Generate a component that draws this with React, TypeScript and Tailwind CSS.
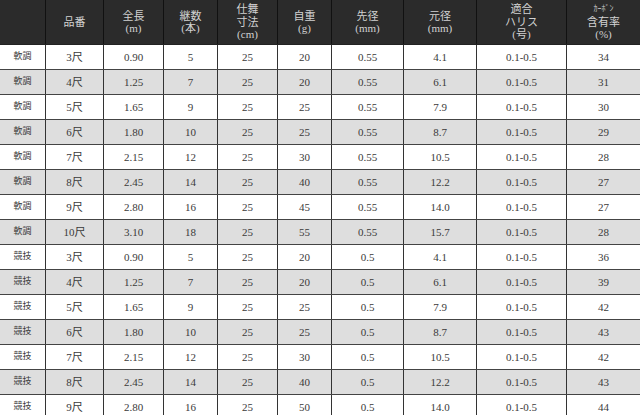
const cols = "grid grid-cols-[46px_58px_60px_54px_60px_54px_72px_73px_90px_73px]";

type Row = [string, string, string, string, string, string, string, string, string, string];

const rows: Row[] = [
  ["軟調", "3尺", "0.90", "5", "25", "20", "0.55", "4.1", "0.1-0.5", "34"],
  ["軟調", "4尺", "1.25", "7", "25", "20", "0.55", "6.1", "0.1-0.5", "31"],
  ["軟調", "5尺", "1.65", "9", "25", "25", "0.55", "7.9", "0.1-0.5", "30"],
  ["軟調", "6尺", "1.80", "10", "25", "25", "0.55", "8.7", "0.1-0.5", "29"],
  ["軟調", "7尺", "2.15", "12", "25", "30", "0.55", "10.5", "0.1-0.5", "28"],
  ["軟調", "8尺", "2.45", "14", "25", "40", "0.55", "12.2", "0.1-0.5", "27"],
  ["軟調", "9尺", "2.80", "16", "25", "45", "0.55", "14.0", "0.1-0.5", "27"],
  ["軟調", "10尺", "3.10", "18", "25", "55", "0.55", "15.7", "0.1-0.5", "28"],
  ["競技", "3尺", "0.90", "5", "25", "20", "0.5", "4.1", "0.1-0.5", "36"],
  ["競技", "4尺", "1.25", "7", "25", "20", "0.5", "6.1", "0.1-0.5", "39"],
  ["競技", "5尺", "1.65", "9", "25", "25", "0.5", "7.9", "0.1-0.5", "42"],
  ["競技", "6尺", "1.80", "10", "25", "25", "0.5", "8.7", "0.1-0.5", "43"],
  ["競技", "7尺", "2.15", "12", "25", "30", "0.5", "10.5", "0.1-0.5", "42"],
  ["競技", "8尺", "2.45", "14", "25", "40", "0.5", "12.2", "0.1-0.5", "43"],
  ["競技", "9尺", "2.80", "16", "25", "50", "0.5", "14.0", "0.1-0.5", "44"],
];

const headers: string[][] = [
  [],
  ["品番"],
  ["全長", "(m)"],
  ["継数", "(本)"],
  ["仕舞", "寸法", "(cm)"],
  ["自重", "(g)"],
  ["先径", "(mm)"],
  ["元径", "(mm)"],
  ["適合", "ハリス", "(号)"],
  ["ｶｰﾎﾞﾝ", "含有率", "(%)"],
];

export default function App() {
  return (
    <div className="h-[415px] w-[640px] overflow-hidden bg-white font-['Liberation_Serif','Noto_Sans_CJK_JP',serif]">
      {/* header */}
      <div className={`${cols} h-[45px] border-b border-[#222] bg-[#2b2b2b] text-[11px] leading-[12.5px] text-[#d2d2d2]`}>
        {headers.map((lines, i) => (
          <div
            key={i}
            className={`flex flex-col items-center justify-center ${i < 9 ? "border-r border-[#111]" : ""}`}
          >
            {lines.map((l, j) => (
              <span key={j} className={i === 9 && j === 0 ? "text-[8px]" : ""}>
                {l}
              </span>
            ))}
          </div>
        ))}
      </div>

      {/* body */}
      {rows.map((r, ri) => (
        <div
          key={ri}
          className={`${cols} h-[25px] border-b border-[#444] text-[11px] text-[#3a3a3a] ${ri % 2 === 1 ? "bg-[#dedede]" : "bg-white"}`}
        >
          {r.map((c, ci) => (
            <div
              key={ci}
              className={`flex items-center justify-center ${ci < 9 ? "border-r border-[#333]" : ""} ${ci === 0 ? "text-[9px]" : ""}`}
            >
              {c}
            </div>
          ))}
        </div>
      ))}
    </div>
  );
}
